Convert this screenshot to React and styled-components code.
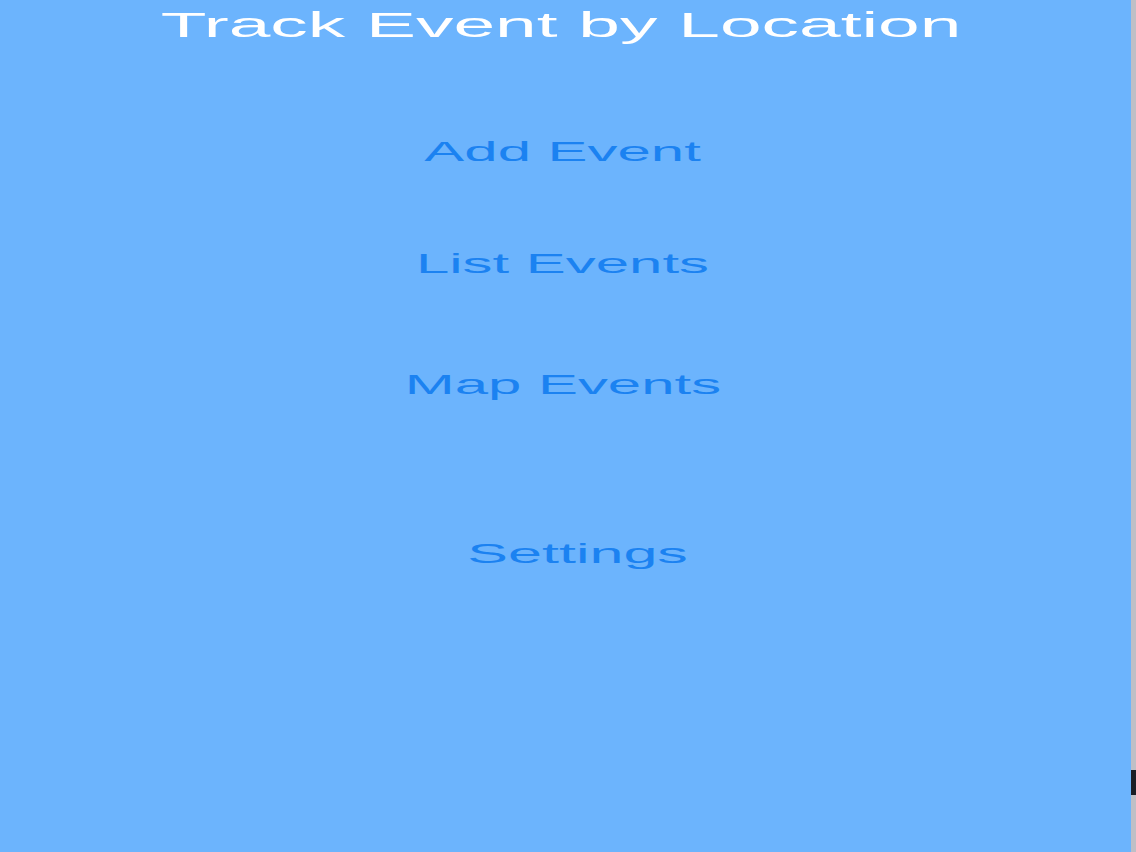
import styled, { createGlobalStyle } from "styled-components";

const GlobalStyle = createGlobalStyle`
  html, body {
    margin: 0;
    padding: 0;
    background: #6cb4fd;
  }
  body {
    font-family: "Liberation Sans", Arial, sans-serif;
  }
`;

const menu = [
  { label: "Add Event", gap: 89, shift: 0 },
  { label: "List Events", gap: 80, shift: 0 },
  { label: "Map Events", gap: 89, shift: 0 },
  { label: "Settings", gap: 137, shift: 30 },
];

const App = () => {
  return (
    <Screen>
      <GlobalStyle />
      <Main>
        <Title>
          <Stretch $scale={2.14}>Track Event by Location</Stretch>
        </Title>
        {menu.map((item) => (
          <MenuLink key={item.label} $gap={item.gap} $shift={item.shift}>
            <Stretch $scale={item.shift ? 2.18 : 2.14}>{item.label}</Stretch>
          </MenuLink>
        ))}
      </Main>
      <Edge>
        <Thumb />
      </Edge>
    </Screen>
  );
};

const Screen = styled.div`
  display: flex;
  width: 1136px;
  height: 852px;
  background: #6cb4fd;
  overflow: hidden;
`;

const Main = styled.div`
  flex: 1;
  display: flex;
  flex-direction: column;
  align-items: center;
  padding-top: 5px;
  padding-right: 6px;
`;

const Stretch = styled.span`
  display: inline-block;
  transform: scaleX(${(p) => p.$scale});
  transform-origin: center;
  white-space: nowrap;
`;

const Title = styled.h1`
  margin: 0 0 0 -2px;
  height: 42px;
  font-size: 35px;
  line-height: 40px;
  font-weight: 400;
  color: #ffffff;
`;

const MenuLink = styled.a`
  display: block;
  margin-top: ${(p) => p.$gap}px;
  padding-left: ${(p) => p.$shift}px;
  height: 32px;
  font-size: 28px;
  line-height: 32px;
  color: #1b82f1;
  text-decoration: none;
  cursor: pointer;
`;

const Edge = styled.div`
  width: 5px;
  display: flex;
  flex-direction: column;
  background: #bfbfc6;
`;

const Thumb = styled.div`
  margin-top: 770px;
  height: 25px;
  background: #1a1e26;
`;

export default App;
